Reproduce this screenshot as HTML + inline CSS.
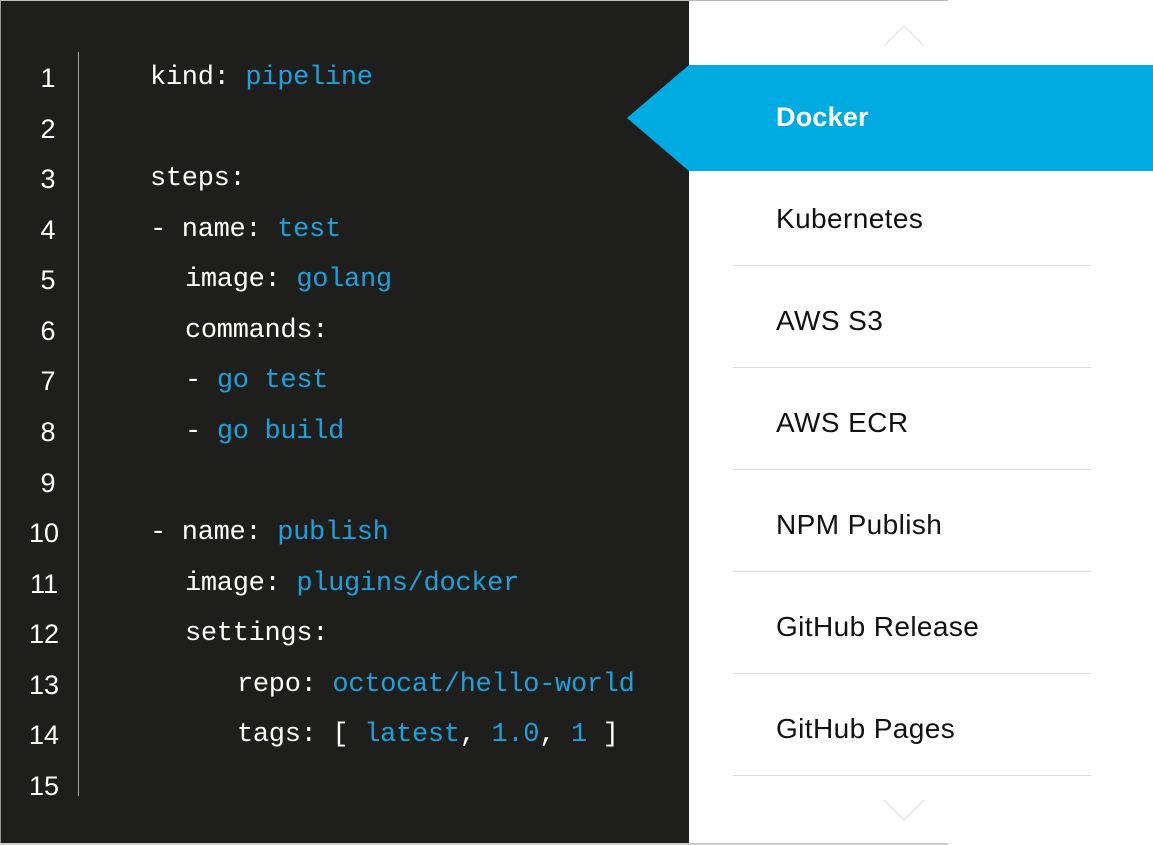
<!DOCTYPE html>
<html><head><meta charset="utf-8"><style>
html,body{margin:0;padding:0;background:#fff;width:1153px;height:845px;overflow:hidden;position:relative;font-family:"Liberation Sans",sans-serif}
.dark{position:absolute;left:0;top:0;width:688px;height:843px;background:#1e1e1c;border-left:1px solid #999;}
.topline{position:absolute;left:0;top:0;width:948px;height:1px;background:#bbb}
.botline{position:absolute;left:0;top:843px;width:948px;height:2px;background:#ccc}
.vline{position:absolute;left:78px;top:52px;width:1px;height:744px;background:#aaa}
.code{position:absolute;left:150px;color:#fff;font-family:"Liberation Mono",monospace;font-size:27px;line-height:30px;white-space:pre;letter-spacing:-0.3px;margin-top:2px}
.b{color:#1da0dc}
.band{position:absolute;left:689px;top:65px;width:464px;height:106px;background:#00abe2}
.tip{position:absolute;left:627px;top:65px;width:0;height:0;border-top:53px solid transparent;border-bottom:53px solid transparent;border-right:62px solid #00abe2}
.item{position:absolute;left:776px;font-size:28px;line-height:30px;color:#111;letter-spacing:0.4px}
.sep{position:absolute;left:733px;width:358px;height:1px;background:#ddd}
.n{position:absolute;width:40px;text-align:center}
</style></head><body>
<div class="dark"></div>
<div class="topline"></div>
<div class="botline"></div>
<div class="vline"></div>

<div style="position:absolute;left:0;top:2px;color:#fff;font-size:27px;line-height:30px;font-family:'Liberation Sans',sans-serif">
<div class="n" style="left:28px;top:61px">1</div>
<div class="n" style="left:28px;top:112px">2</div>
<div class="n" style="left:28px;top:162px">3</div>
<div class="n" style="left:28px;top:213px">4</div>
<div class="n" style="left:28px;top:263px">5</div>
<div class="n" style="left:28px;top:314px">6</div>
<div class="n" style="left:28px;top:364px">7</div>
<div class="n" style="left:28px;top:415px">8</div>
<div class="n" style="left:28px;top:466px">9</div>
<div class="n" style="left:24px;top:516px">10</div>
<div class="n" style="left:24px;top:567px">11</div>
<div class="n" style="left:24px;top:617px">12</div>
<div class="n" style="left:24px;top:668px">13</div>
<div class="n" style="left:24px;top:718px">14</div>
<div class="n" style="left:24px;top:769px">15</div>
</div>

<div class="code" style="top:61px">kind: <span class="b">pipeline</span></div>
<div class="code" style="top:162px">steps:</div>
<div class="code" style="top:213px">- name: <span class="b">test</span></div>
<div class="code" style="top:263px;left:185px">image: <span class="b">golang</span></div>
<div class="code" style="top:314px;left:185px">commands:</div>
<div class="code" style="top:364px;left:185px">- <span class="b">go test</span></div>
<div class="code" style="top:415px;left:185px">- <span class="b">go build</span></div>
<div class="code" style="top:516px">- name: <span class="b">publish</span></div>
<div class="code" style="top:567px;left:185px">image: <span class="b">plugins/docker</span></div>
<div class="code" style="top:617px;left:185px">settings:</div>
<div class="code" style="top:668px;left:237px">repo: <span class="b">octocat/hello-world</span></div>
<div class="code" style="top:718px;left:237px">tags: [ <span class="b">latest</span>, <span class="b">1.0</span>, <span class="b">1</span> ]</div>

<svg style="position:absolute;left:882px;top:24px" width="44" height="24"><polyline points="2,22 22,2 42,22" fill="none" stroke="#ddd" stroke-width="1"/></svg>
<svg style="position:absolute;left:882px;top:798px" width="44" height="24"><polyline points="2,2 22,22 42,2" fill="none" stroke="#ddd" stroke-width="1"/></svg>

<div class="band"></div>
<div class="tip"></div>
<div class="item" style="top:102px;color:#fff;font-weight:bold;font-size:27px;letter-spacing:0.2px">Docker</div>
<div class="item" style="top:204px">Kubernetes</div>
<div class="sep" style="top:265px"></div>
<div class="item" style="top:306px">AWS S3</div>
<div class="sep" style="top:367px"></div>
<div class="item" style="top:408px">AWS ECR</div>
<div class="sep" style="top:469px"></div>
<div class="item" style="top:510px">NPM Publish</div>
<div class="sep" style="top:571px"></div>
<div class="item" style="top:612px">GitHub Release</div>
<div class="sep" style="top:673px"></div>
<div class="item" style="top:714px">GitHub Pages</div>
<div class="sep" style="top:775px"></div>
</body></html>
